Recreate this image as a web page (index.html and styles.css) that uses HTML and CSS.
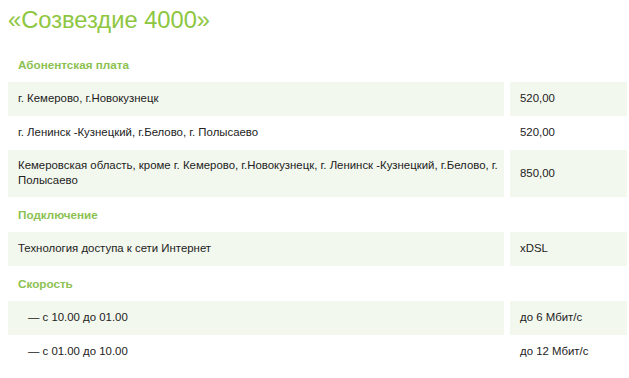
FILE: index.html
```html
<!DOCTYPE html>
<html lang="ru">
<head>
<meta charset="utf-8">
<title>«Созвездие 4000»</title>
<link rel="stylesheet" href="styles.css">
</head>
<body>
<div class="page">
  <h1 class="title">«Созвездие 4000»</h1>
  <div class="table">
    <div class="heading">Абонентская плата</div>
    <div class="cell alt">г. Кемерово, г.Новокузнецк</div>
    <div class="cell alt">520,00</div>
    <div class="cell">г. Ленинск -Кузнецкий, г.Белово, г. Полысаево</div>
    <div class="cell">520,00</div>
    <div class="cell alt wide">Кемеровская область, кроме г. Кемерово, г.Новокузнецк, г. Ленинск -Кузнецкий, г.Белово, г. Полысаево</div>
    <div class="cell alt">850,00</div>

    <div class="heading">Подключение</div>
    <div class="cell alt">Технология доступа к сети Интернет</div>
    <div class="cell alt">xDSL</div>

    <div class="heading">Скорость</div>
    <div class="cell alt indent">— с 10.00 до 01.00</div>
    <div class="cell alt">до 6 Мбит/с</div>
    <div class="cell indent">— с 01.00 до 10.00</div>
    <div class="cell">до 12 Мбит/с</div>
  </div>
</div>
</body>
</html>
```

FILE: styles.css
```css
html, body {
  margin: 0;
  padding: 0;
  background: #ffffff;
}

body {
  font-family: "Liberation Sans", Arial, sans-serif;
  font-size: 11.4px;
  color: #222222;
}

.page {
  padding: 6px 2px 0 8px;
}

.title {
  margin: 0 0 13px 0;
  font-size: 23.7px;
  line-height: 28px;
  font-weight: normal;
  color: #8dc63f;
}

.table {
  display: grid;
  grid-template-columns: 496px 117px;
  column-gap: 6px;
}

.heading {
  grid-column: 1 / -1;
  height: 35px;
  display: flex;
  align-items: center;
  padding: 0 10px;
  font-weight: bold;
  font-size: 11.7px;
  color: #8cc152;
}

.cell {
  min-height: 34px;
  box-sizing: border-box;
  display: flex;
  align-items: center;
  padding: 8px 10px 9px 10px;
  line-height: 15px;
}

.cell.wide {
  padding-right: 2px;
}

.cell.alt {
  background: #f3f8ee;
}

.cell.indent {
  padding-left: 20px;
}
```
